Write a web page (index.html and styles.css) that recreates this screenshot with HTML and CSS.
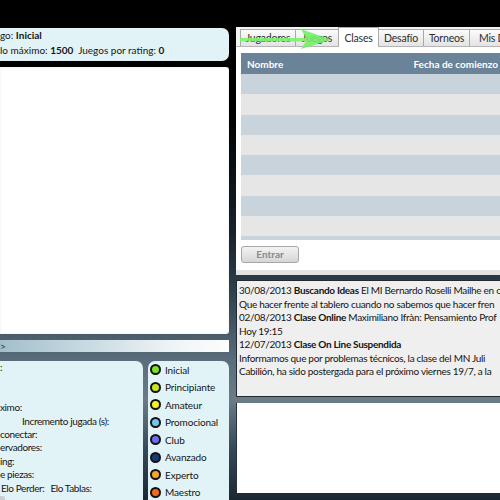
FILE: index.html
```html
<!DOCTYPE html>
<html lang="es">
<head>
<meta charset="utf-8">
<title>Clases</title>
<link rel="stylesheet" href="styles.css">
</head>
<body>
<div class="app">
  <div class="left">
    <div class="info">
      <div class="line">go: <b>Inicial</b></div>
      <div class="line">lo máximo: <b>1500</b>&nbsp; Juegos por rating: <b>0</b></div>
    </div>
    <div class="board"></div>
    <div class="cmd">&gt;</div>
    <div class="bottom">
      <div class="stats">
        <div class="sline">:</div>
        <div class="sline"></div>
        <div class="sline"></div>
        <div class="sline">ximo:</div>
        <div class="sline indent">Incremento jugada (s):</div>
        <div class="sline">conectar:</div>
        <div class="sline">ervadores:</div>
        <div class="sline">ing:</div>
        <div class="sline">e piezas:</div>
        <div class="sline elo"><span>Elo Perder:</span><span>Elo Tablas:</span></div>
        <div class="check"></div>
      </div>
      <div class="legend">
        <div class="lrow"><span class="dot c1"></span>Inicial</div>
        <div class="lrow"><span class="dot c2"></span>Principiante</div>
        <div class="lrow"><span class="dot c3"></span>Amateur</div>
        <div class="lrow"><span class="dot c4"></span>Promocional</div>
        <div class="lrow"><span class="dot c5"></span>Club</div>
        <div class="lrow"><span class="dot c6"></span>Avanzado</div>
        <div class="lrow"><span class="dot c7"></span>Experto</div>
        <div class="lrow"><span class="dot c8"></span>Maestro</div>
      </div>
    </div>
  </div>
  <div class="right">
    <div class="tabpanel">
      <div class="tabs">
        <div class="tab t1">Jugadores</div>
        <div class="tab t2">Juegos</div>
        <div class="tab t3 active">Clases</div>
        <div class="tab t4">Desafío</div>
        <div class="tab t5">Torneos</div>
        <div class="tab t6">Mis Desafíos</div>
        <svg class="arrow" width="96" height="22" viewBox="0 0 96 22">
          <rect x="2" y="10" width="66" height="3.5" fill="#7cf270" opacity="0.9"/>
          <polygon points="63,1 93,11.7 63,21 69,11.7" fill="#72ee68" opacity="0.9"/>
        </svg>
      </div>
      <div class="content">
        <div class="thead"><span>Nombre</span><span>Fecha de comienzo</span></div>
        <div class="rows">
          <div class="row odd"></div>
          <div class="row"></div>
          <div class="row odd"></div>
          <div class="row"></div>
          <div class="row odd"></div>
          <div class="row"></div>
          <div class="row odd"></div>
          <div class="row"></div>
          <div class="row odd last"></div>
        </div>
        <div class="btn">Entrar</div>
      </div>
    </div>
    <div class="news">
      <div class="nline">30/08/2013 <b>Buscando Ideas</b> El MI Bernardo Roselli Mailhe en c</div>
      <div class="nline">Que hacer frente al tablero cuando no sabemos que hacer fren</div>
      <div class="nline">02/08/2013 <b>Clase Online</b> Maximiliano Ifràn: Pensamiento Prof</div>
      <div class="nline">Hoy 19:15</div>
      <div class="nline">12/07/2013 <b>Clase On Line Suspendida</b></div>
      <div class="nline">Informamos que por problemas técnicos, la clase del MN Juli</div>
      <div class="nline">Cabilión, ha sido postergada para el próximo viernes 19/7, a la</div>
    </div>
    <div class="chat"></div>
  </div>
</div>
</body>
</html>
```
FILE: styles.css
```css
html, body {
  margin: 0;
  padding: 0;
}
body {
  width: 500px;
  height: 500px;
  overflow: hidden;
  background: linear-gradient(180deg, #000 0px, #000 110px, #16212a 230px, #2e404c 290px, #5a6d7a 360px, #6a7c88 400px, #35485a 450px, #1a2833 500px);
  font-family: Lato, "Open Sans", sans-serif;
  font-size: 10px;
  letter-spacing: -0.3px;
  color: #151515;
}
.app {
  display: grid;
  grid-template-columns: 229px 264px;
  column-gap: 7px;
  height: 500px;
}
.left {
  display: flex;
  flex-direction: column;
  padding-top: 28px;
  min-width: 0;
}
.info {
  height: 33px;
  box-sizing: border-box;
  background: #e1f3f7;
  border-radius: 0 7px 7px 0;
  letter-spacing: 0;
}
.info .line {
  height: 14.5px;
  line-height: 14.5px;
  white-space: nowrap;
}
.board {
  margin-top: 6px;
  height: 267px;
  background: #fff;
  border-radius: 0 3px 3px 0;
  box-shadow: inset 0 0 3px rgba(0,0,0,0.08);
}
.cmd {
  margin-top: 6px;
  height: 12px;
  line-height: 12px;
  font-size: 10px;
  color: #2a3a44;
  background: linear-gradient(90deg, #a3becb 0%, #c9dce3 40%, #eef4f6 75%, #fdfdfd 100%);
}
.bottom {
  margin-top: 9px;
  display: flex;
  gap: 5px;
  flex: 1;
}
.stats {
  width: 143px;
  background: #e1f3f7;
  border-radius: 0 7px 0 0;
  letter-spacing: -0.4px;
}
.sline {
  height: 13.4px;
  line-height: 13.4px;
  white-space: nowrap;
}
.indent {
  padding-left: 22px;
}
.elo {
  display: flex;
  gap: 6px;
  padding-left: 1px;
}
.check {
  margin-top: 1px;
  width: 5px;
  height: 6px;
  background: #c9cfd3;
  border-radius: 0 2px 0 0;
}
.legend {
  flex: 1;
  background: #e1f3f7;
  border-radius: 7px 7px 0 0;
  padding-left: 2px;
  letter-spacing: -0.15px;
}
.lrow {
  height: 17.5px;
  display: flex;
  align-items: center;
  gap: 4px;
  white-space: nowrap;
}
.dot {
  width: 11px;
  height: 11px;
  box-sizing: border-box;
  border: 2px solid #111;
  border-radius: 50%;
  flex: none;
}
.c1 { background: #7ee21b; }
.c2 { background: #cbe61f; }
.c3 { background: #f2f21f; }
.c4 { background: #6fc6ef; }
.c5 { background: #6c6cee; }
.c6 { background: #173a74; }
.c7 { background: #f6a622; }
.c8 { background: #f06a18; }

.right {
  display: flex;
  flex-direction: column;
  padding-top: 27px;
  min-width: 0;
}
.tabpanel {
  height: 248px;
  background: #fff;
  border-bottom: 5px solid #e2e2e2;
  box-sizing: border-box;
  display: flex;
  flex-direction: column;
}
.tabs {
  height: 20px;
  flex: none;
  display: flex;
  align-items: flex-end;
  padding-left: 4px;
  border-bottom: 1px solid #b5b5b5;
  box-sizing: border-box;
  position: relative;
  background: #f4f4f4;
  font-size: 10.5px;
  letter-spacing: -0.2px;
}
.tab {
  height: 17px;
  box-sizing: border-box;
  border: 1px solid #a9a9a9;
  border-bottom: none;
  margin-right: -1px;
  background: linear-gradient(180deg, #fbfbfb, #e3e3e3);
  text-align: center;
  line-height: 16px;
  color: #2e2e2e;
  white-space: nowrap;
  overflow: hidden;
  flex: none;
}
.t1 { width: 56px; }
.t2 { width: 44px; }
.t3 { width: 41px; }
.t4 { width: 46px; }
.t5 { width: 47px; }
.t6 { width: 60px; text-align: left; padding-left: 9px; }
.tab.active {
  height: 20px;
  margin-bottom: -1px;
  background: #fff;
  line-height: 20px;
  position: relative;
  z-index: 1;
}
.arrow {
  position: absolute;
  left: 2px;
  top: 1px;
  z-index: 2;
}
.content {
  flex: 1;
  padding: 6px 0 0 5px;
}
.thead {
  height: 21px;
  background: #6b8398;
  color: #fff;
  font-weight: bold;
  letter-spacing: 0;
  display: flex;
  justify-content: space-between;
  align-items: center;
  padding: 0 2px 0 6px;
  white-space: nowrap;
}
.row {
  height: 20.3px;
  background: #e6e6e6;
}
.row.odd {
  background: #c9d3dc;
}
.row.last {
  height: 4px;
}
.btn {
  margin-top: 6px;
  width: 58px;
  height: 17px;
  box-sizing: border-box;
  border: 1px solid #a6a6a6;
  border-radius: 3px;
  background: linear-gradient(180deg, #f3f3f3, #d6d6d6);
  color: #8a8a8a;
  font-weight: bold;
  letter-spacing: 0;
  text-align: center;
  line-height: 15px;
}
.news {
  margin-top: 5px;
  height: 117px;
  box-sizing: border-box;
  background: #efefef;
  border: 1px solid #232a30;
  border-right: none;
  padding: 3px 0 0 2px;
  overflow: hidden;
  letter-spacing: -0.3px;
}
.nline {
  height: 13.5px;
  line-height: 13.5px;
  white-space: nowrap;
}
.chat {
  margin-top: 6px;
  height: 90px;
  background: #fff;
  border-left: 1px solid #26323a;
}
```
